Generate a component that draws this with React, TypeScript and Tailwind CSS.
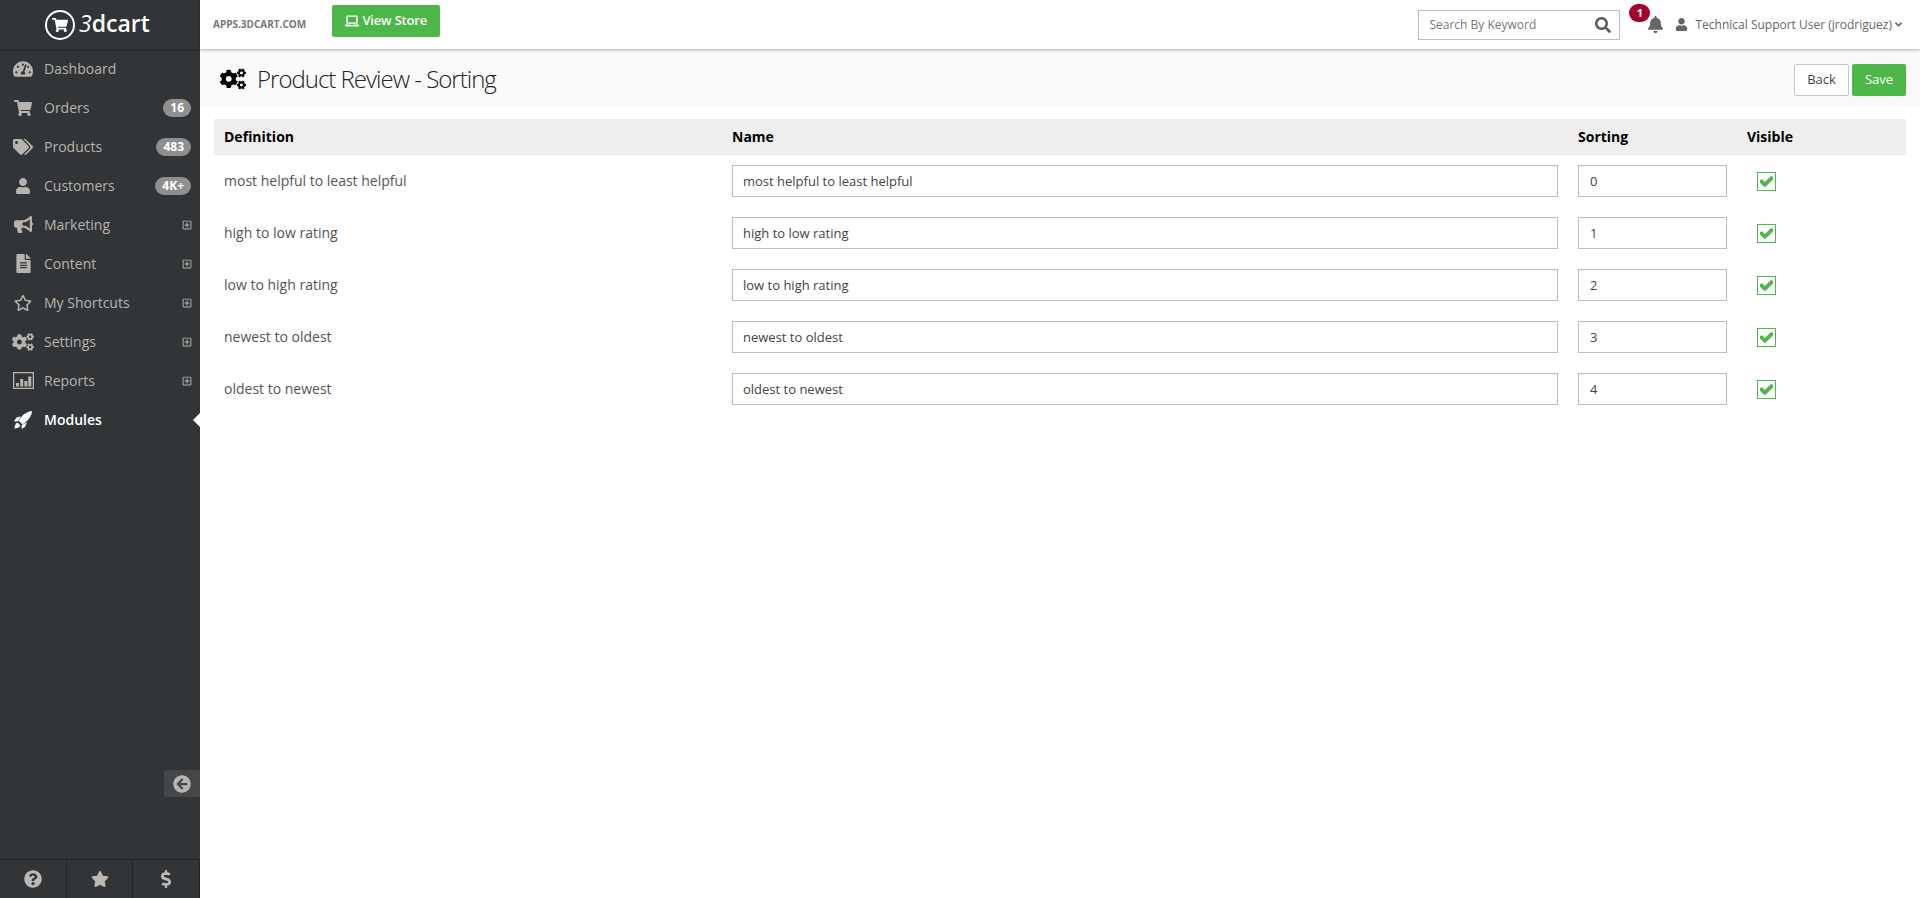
import type { ReactNode } from "react";
import {
  FaAngleDown,
  FaArrowCircleLeft,
  FaBell,
  FaBullhorn,
  FaCheck,
  FaCogs,
  FaDollarSign,
  FaFileAlt,
  FaLaptop,
  FaQuestionCircle,
  FaRegPlusSquare,
  FaRegStar,
  FaSearch,
  FaShoppingCart,
  FaStar,
  FaTachometerAlt,
  FaTags,
  FaUser,
} from "react-icons/fa";

function ReportsIcon() {
  return (
    <svg viewBox="0 0 21 17" className="h-[17px] w-[21px]" fill="currentColor">
      <path d="M0 0h21v17H0zM1.3 1.3v14.4h18.4V1.3z" fillRule="evenodd" />
      <path d="M3 11h3v3.5H3zM7.2 7h3v7.5h-3zM11.4 9h3v5.5h-3zM15.3 4.5h3v10h-3z" />
    </svg>
  );
}

function RocketIcon() {
  return (
    <svg viewBox="0 0 18 18" className="h-[18px] w-[18px]" fill="currentColor">
      <path d="M18 0C14 .2 10.500 2.500 8 5L4.500 9.500 8.500 13.500 13 10C15.500 7.500 17.800 4 18 0z" />
      <path d="M6.800 5.200L2.200 6.800 0 10.500 4 10.200z" />
      <path d="M12.800 11.200L11.200 15.800 7.500 18 7.800 14z" />
      <path d="M3.500 11.500L6.500 14.500C5.500 16.500 3 17.500.5 17.500.5 15 1.500 12.500 3.500 11.500z" />
    </svg>
  );
}

type NavItem = {
  label: string;
  icon: ReactNode;
  badge?: string;
  plus?: boolean;
  active?: boolean;
};

const navItems: NavItem[] = [
  { label: "Dashboard", icon: <FaTachometerAlt className="text-[20px]" /> },
  { label: "Orders", icon: <FaShoppingCart className="text-[18px]" />, badge: "16" },
  { label: "Products", icon: <FaTags className="text-[20px]" />, badge: "483" },
  { label: "Customers", icon: <FaUser className="text-[16px]" />, badge: "4K+" },
  { label: "Marketing", icon: <FaBullhorn className="text-[19px]" />, plus: true },
  { label: "Content", icon: <FaFileAlt className="text-[19px]" />, plus: true },
  { label: "My Shortcuts", icon: <FaRegStar className="text-[18px]" />, plus: true },
  { label: "Settings", icon: <FaCogs className="text-[22px]" />, plus: true },
  { label: "Reports", icon: <ReportsIcon />, plus: true },
  { label: "Modules", icon: <RocketIcon />, active: true },
];

const rows = [
  "most helpful to least helpful",
  "high to low rating",
  "low to high rating",
  "newest to oldest",
  "oldest to newest",
];

function Logo() {
  return (
    <div className="flex items-center gap-[4px] text-white">
      <div className="flex h-[30px] w-[30px] items-center justify-center rounded-full border-2 border-white">
        <FaShoppingCart className="text-[16px]" />
      </div>
      <span className="pb-[2px] text-[23px] font-semibold leading-none">
        <span className="font-normal italic">3</span>dcart
      </span>
    </div>
  );
}

function Sidebar() {
  return (
    <aside className="flex h-[898px] w-[200px] shrink-0 flex-col bg-[#313537]">
      <div className="flex h-[49px] items-center pl-[45px] shadow-[0_1px_2px_rgba(0,0,0,0.25)]">
        <Logo />
      </div>
      <nav className="flex flex-col">
        {navItems.map((item) => (
          <div
            key={item.label}
            className={`relative flex h-[39px] items-center text-[14px] ${
              item.active ? "font-semibold text-white" : "text-[#b9b3ad]"
            }`}
          >
            <div className="flex w-[44px] shrink-0 justify-center pl-[2px]">{item.icon}</div>
            <span>{item.label}</span>
            {item.badge && (
              <span className="ml-auto mr-[9px] rounded-full bg-[#8f8f8f] px-[7px] text-[12px] font-bold leading-[18px] text-white">
                {item.badge}
              </span>
            )}
            {item.plus && <FaRegPlusSquare className="ml-auto mr-[8px] text-[10px] text-[#b9b3ad]" />}
            {item.active && (
              <span className="absolute right-0 h-0 w-0 border-y-[7px] border-r-[7px] border-y-transparent border-r-white" />
            )}
          </div>
        ))}
      </nav>
      <div className="mt-auto flex flex-col">
        <div className="mb-[62px] flex justify-end">
          <div className="flex h-[27px] w-[36px] items-center justify-center rounded-l-[3px] bg-[#444648] text-[18px] text-[#b5b5b5]">
            <FaArrowCircleLeft />
          </div>
        </div>
        <div className="flex h-[39px] border-t border-[#25282a] text-[18px] text-[#bdb8b3]">
          <div className="flex w-[67px] items-center justify-center border-r border-[#25282a]">
            <FaQuestionCircle />
          </div>
          <div className="flex w-[66px] items-center justify-center border-r border-[#25282a]">
            <FaStar />
          </div>
          <div className="flex flex-1 items-center justify-center border-r border-[#25282a]">
            <FaDollarSign />
          </div>
        </div>
      </div>
    </aside>
  );
}

function TopBar() {
  return (
    <header className="relative flex h-[49px] items-center bg-white pl-[13px] pr-[16px] shadow-[0_1px_3px_rgba(0,0,0,0.3)]">
      <span className="text-[10px] font-bold uppercase text-[#777]">apps.3dcart.com</span>
      <button className="ml-[26px] mt-[-7px] flex h-[32px] w-[108px] items-center justify-center gap-[3px] rounded-[2px] bg-[#4db74a] text-[13px] font-semibold tracking-[-0.2px] text-white">
        <FaLaptop className="text-[14px]" />
        View Store
      </button>
      <div className="ml-auto flex h-[30px] w-[202px] items-center justify-between border border-[#bdbdbd] pl-[10px] pr-[8px]">
        <span className="text-[12px] text-[#777]">Search By Keyword</span>
        <FaSearch className="text-[16px] text-[#5c5c5c]" />
      </div>
      <div className="relative ml-[27px] text-[17px] text-[#666]">
        <FaBell />
        <span className="absolute left-[-18px] top-[-12px] flex h-[18px] w-[21px] items-center justify-center rounded-full bg-[#a5002c] text-[11px] font-bold text-white">
          1
        </span>
      </div>
      <FaUser className="ml-[11px] text-[13px] text-[#666]" />
      <span className="ml-[7px] text-[12px] text-[#666]">Technical Support User (jrodriguez)</span>
      <FaAngleDown className="ml-[1px] text-[11px] text-[#666]" />
    </header>
  );
}

function TitleBar() {
  return (
    <div className="flex h-[57px] items-center bg-[#fafafa] pl-[20px] pr-[14px]">
      <FaCogs className="mt-[2px] text-[26px] text-black" />
      <h1 className="ml-[11px] mt-[2px] text-[24px] font-light tracking-[-1px] text-[#222]">
        Product Review - Sorting
      </h1>
      <div className="ml-auto mt-[5px] flex gap-[3px]">
        <button className="h-[32px] w-[55px] rounded-[2px] border border-[#c8c8c8] bg-white text-[13px] text-[#444]">
          Back
        </button>
        <button className="h-[32px] w-[54px] rounded-[2px] bg-[#4db74a] text-[13px] text-white">Save</button>
      </div>
    </div>
  );
}

function SortingTable() {
  return (
    <div className="pl-[14px] pr-[14px] pt-[13px]">
      <div className="grid h-[36px] grid-cols-[518px_846px_169px_1fr] items-center bg-[#eeeeee] pb-[2px] text-[14px] font-bold text-black">
        <span className="pl-[10px]">Definition</span>
        <span>Name</span>
        <span>Sorting</span>
        <span>Visible</span>
      </div>
      <div className="flex flex-col gap-[20px] pt-[10px]">
        {rows.map((row, i) => (
          <div key={row} className="grid h-[32px] grid-cols-[518px_846px_169px_1fr] items-center text-[14px] text-[#555]">
            <span className="pb-[2px] pl-[10px]">{row}</span>
            <input
              readOnly
              value={row}
              className="h-[32px] w-[826px] border border-[#bdbdbd] pl-[10px] text-[13px] text-[#444] outline-none"
            />
            <input
              readOnly
              value={i}
              className="h-[32px] w-[149px] border border-[#bdbdbd] pl-[11px] text-[13px] text-[#444] outline-none"
            />
            <div className="pl-[10px]">
              <div className="flex h-[19px] w-[19px] items-center justify-center border border-[#4db74a] text-[13px] text-[#4db74a]">
                <FaCheck className="stroke-[50]" />
              </div>
            </div>
          </div>
        ))}
      </div>
    </div>
  );
}

export default function App() {
  return (
    <div className="flex h-[898px] w-[1920px] overflow-hidden bg-white font-['Open_Sans',sans-serif]">
      <Sidebar />
      <main className="min-w-0 flex-1">
        <TopBar />
        <TitleBar />
        <SortingTable />
      </main>
    </div>
  );
}
